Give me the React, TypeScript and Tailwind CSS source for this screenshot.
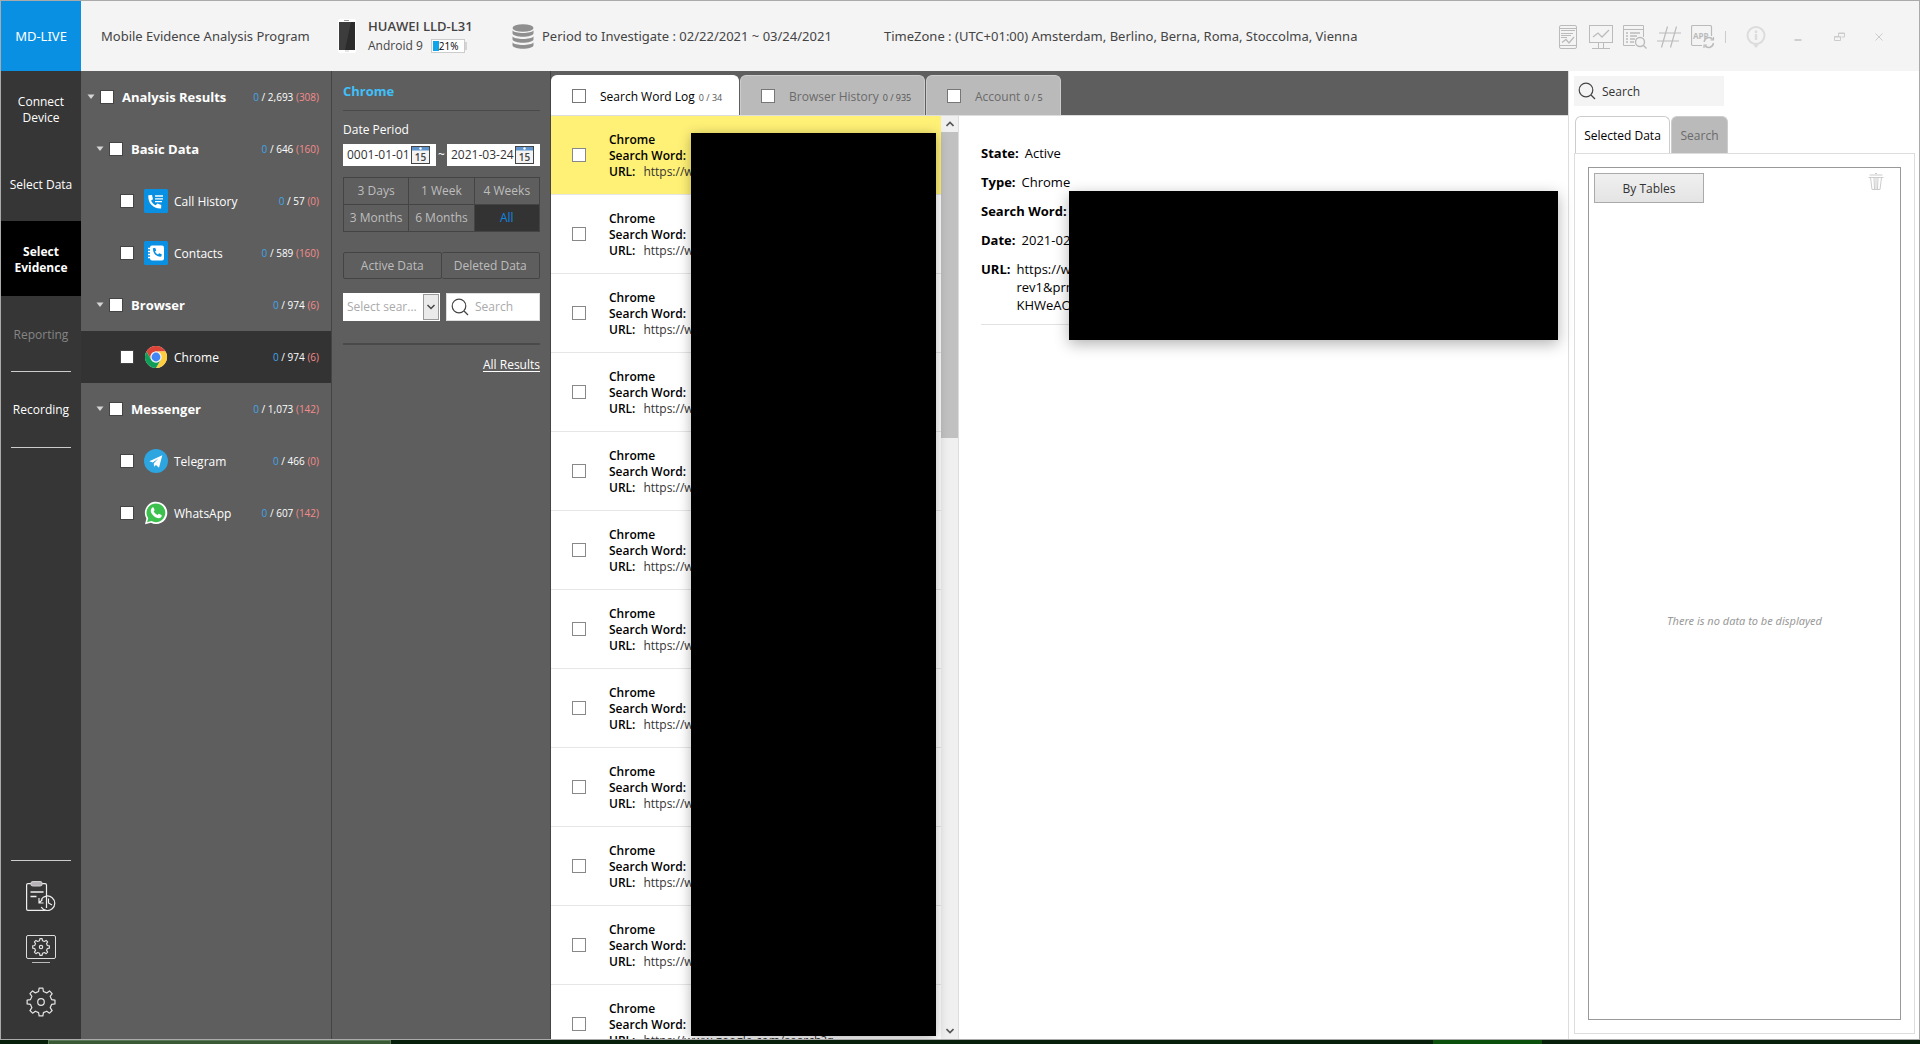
import { useState, ReactNode } from 'react'

interface TreeItem {
  label: string
  level: number
  total: string
  deleted: string
  icon?: ReactNode
  active?: boolean
}

const field = 'appearance-none shrink-0 size-3.5 bg-white checked:bg-sky-500'

function CallIcon() {
  return (
    <svg viewBox="0 0 24 24" className="size-6">
      <rect width="24" height="24" rx="1.5" fill="#0a90e3" />
      <path d="M4.300 6.300 8 6l1 4.200-1.900 1.300c.8 2.200 2.300 3.800 4.600 4.800l1.700-1.800 3.900 1.500-.2 3.500C9.500 20 3.800 14.500 4.300 6.300z" fill="#fff" />
      <path d="M11 7h8M11 9.800h8M11 12.600h7" stroke="#fff" strokeWidth="1.300" />
    </svg>
  )
}

function ContactsIcon() {
  return (
    <svg viewBox="0 0 24 24" className="size-6">
      <rect width="24" height="24" rx="1.5" fill="#0a90e3" />
      <rect x="6" y="4.500" width="14" height="15" rx="2" fill="#fff" />
      <path d="M4 7.500h3.500M4 10.500h3.500M4 13.500h3.500M4 16.500h3.500" stroke="#fff" strokeWidth="1.400" />
      <path d="m9 7.200 2.200-.4 1 2.700-1.200 1c.6 1.400 1.600 2.400 3 3l1.100-1.200 2.700 1-.4 2.300C12.300 16 8.600 12.300 9 7.200z" fill="#0a90e3" />
    </svg>
  )
}

function ChromeIcon() {
  return (
    <svg viewBox="0 0 48 48" className="size-6">
      <circle cx="24" cy="24" r="22" fill="#fff" />
      <path d="M24 13h19.100A22 22 0 0 0 4.900 13l9.600 16.500A11 11 0 0 1 24 13z" fill="#db4437" />
      <path d="M33.500 29.500 24 46a22 22 0 0 0 19.100-33H24a11 11 0 0 1 9.500 16.500z" fill="#ffcd40" />
      <path d="M14.500 29.500 4.900 13A22 22 0 0 0 24 46l9.500-16.500a11 11 0 0 1-19 0z" fill="#0f9d58" />
      <circle cx="24" cy="24" r="11" fill="#f1f1f1" />
      <circle cx="24" cy="24" r="8.800" fill="#4285f4" />
    </svg>
  )
}

function TelegramIcon() {
  return (
    <svg viewBox="0 0 24 24" className="size-6">
      <circle cx="12" cy="12" r="12" fill="#2ca5e0" />
      <path d="M5.300 12.200 18.300 6.300 15 18.800l-3-2.900-2 1.900-.2-3.500 4.600-4.800-5.700 4z" fill="#fff" />
    </svg>
  )
}

function WhatsAppIcon() {
  return (
    <svg viewBox="0 0 24 24" className="size-6">
      <path d="M1 23.200 2.400 17.500A11.200 11.200 0 1 1 6.900 21.800z" fill="#fff" />
      <path d="M3.100 21.200 4.200 17.200A9.400 9.400 0 1 1 7.300 20z" fill="#3cc14e" />
      <path d="M8.400 6.400c.6-.3 1.100-.1 1.300.4l.8 1.900c.1.400 0 .7-.9 1.600.9 1.800 2.200 3 4.100 3.800.9-1.100 1.100-1.400 1.600-1.200l2.200 1.100c.4.300.2 1.900-.7 2.600-1.100.9-2.700.9-4.900-.1-2.800-1.300-4.800-4.200-5.100-5.900-.2-1.700.7-3.700 1.600-4.200z" fill="#fff" />
    </svg>
  )
}

function SearchIcon({ className }: { className: string }) {
  return (
    <svg viewBox="0 0 18 18" fill="none" stroke="#444" strokeWidth="1.200" className={className}>
      <circle cx="8" cy="8" r="6.800" />
      <path d="m13 13 4 4" />
    </svg>
  )
}

// gear outline drawn with eight square teeth
function Gear({ className, hub }: { className: string; hub: number }) {
  return (
    <svg viewBox="0 0 32 32" fill="none" stroke="#e4e4e4" strokeWidth="1.300" strokeLinejoin="round" className={className}>
      <path d="M14 1.200h4l.6 3.600 3.500 1.500 3-2.100 2.800 2.800-2.100 3 1.500 3.400 3.600.6v4l-3.600.6-1.500 3.500 2.100 3-2.800 2.800-3-2.100-3.500 1.500-.6 3.600h-4l-.6-3.600-3.400-1.500-3 2.100-2.800-2.800 2.100-3-1.500-3.500-3.600-.6v-4l3.600-.6 1.500-3.400-2.100-3L7 4.200l3 2.100 3.400-1.500z" />
      <circle cx="16" cy="16" r={hub} />
    </svg>
  )
}

const tree: TreeItem[] = [
  { label: 'Analysis Results', level: 0, total: '2,693', deleted: '308' },
  { label: 'Basic Data', level: 1, total: '646', deleted: '160' },
  { label: 'Call History', level: 2, total: '57', deleted: '0', icon: <CallIcon /> },
  { label: 'Contacts', level: 2, total: '589', deleted: '160', icon: <ContactsIcon /> },
  { label: 'Browser', level: 1, total: '974', deleted: '6' },
  { label: 'Chrome', level: 2, total: '974', deleted: '6', icon: <ChromeIcon />, active: true },
  { label: 'Messenger', level: 1, total: '1,073', deleted: '142' },
  { label: 'Telegram', level: 2, total: '466', deleted: '0', icon: <TelegramIcon /> },
  { label: 'WhatsApp', level: 2, total: '607', deleted: '142', icon: <WhatsAppIcon /> },
]

const indents = ['pl-1.5', 'pl-[15px]', 'pl-[39px]']

const steps = [
  { label: 'Connect Device', style: 'px-3 text-white' },
  { label: 'Select Data', style: 'text-white' },
  { label: 'Select Evidence', style: 'bg-black px-3 text-white font-bold' },
  { label: 'Reporting', style: 'text-[#858585]' },
]

const tabs = [
  { label: 'Search Word Log', count: '0 / 34', width: 'w-[188px]' },
  { label: 'Browser History', count: '0 / 935', width: 'w-[185px]' },
  { label: 'Account', count: '0 / 5', width: 'w-[135px]' },
]

const periods = ['3 Days', '1 Week', '4 Weeks', '3 Months', '6 Months', 'All']

function Header() {
  return (
    <header className="flex h-[70px] shrink-0 items-center bg-[#f4f4f4] font-['Noto_Sans','Open_Sans',sans-serif] text-[13px] text-[#444]">
      <div className="flex h-full w-20 shrink-0 items-center justify-center bg-[#0a90e3] pt-0.5 text-white">MD-LIVE</div>
      <h1 className="w-[257px] shrink-0 pt-0.5 pl-5 whitespace-nowrap">Mobile Evidence Analysis Program</h1>
      <div className="flex w-[174px] shrink-0 items-center gap-3 font-['Open_Sans','Noto_Sans',sans-serif]">
        <svg viewBox="0 0 18 34" className="h-[34px] w-[18px] shrink-0">
          <rect width="18" height="34" rx="2" fill="#fff" />
          <path d="M6 1.500h5" stroke="#999" />
          <path d="M7 32h4" stroke="#ccc" />
          <rect x="1" y="3" width="16" height="28" fill="#2b2b2b" />
          <path d="M1 3h12L7 31H1z" fill="#3c3c3c" />
        </svg>
        <div className="leading-5">
          <div className="font-semibold whitespace-nowrap">HUAWEI LLD-L31</div>
          <div className="flex items-center gap-2 text-xs leading-5 whitespace-nowrap">
            Android 9
            <span className="flex items-center">
              <span className="flex h-3.5 w-[34px] border border-[#ccc] bg-white p-px">
                <span className="w-1.5 bg-[#0ea5ea]" />
                <span className="text-[10px] leading-[10px] text-black">21%</span>
              </span>
              <span className="h-2 w-0.5 bg-[#d4d4d4]" />
            </span>
          </div>
        </div>
      </div>
      <svg viewBox="0 0 22 25" fill="#8f8f8f" className="mr-2 h-[25px] w-[22px] shrink-0">
        <ellipse cx="11" cy="4" rx="10.500" ry="3.800" />
        <path d="M.5 6.200c2 3.600 19 3.600 21 0v3c0 4.600-21 4.600-21 0z" />
        <path d="M.5 12.200c2 3.600 19 3.600 21 0v3c0 4.600-21 4.600-21 0z" />
        <path d="M.5 18.200c2 3.600 19 3.600 21 0v3c0 4.600-21 4.600-21 0z" />
      </svg>
      <p className="w-[342px] shrink-0 pt-0.5 whitespace-nowrap">Period to Investigate : 02/22/2021 ~ 03/24/2021</p>
      <p className="pt-0.5 whitespace-nowrap">TimeZone : (UTC+01:00) Amsterdam, Berlino, Berna, Roma, Stoccolma, Vienna</p>

      <div className="ml-auto flex shrink-0 items-center pt-0.5 pr-[34px]">
        <button aria-label="Report" className="mr-3">
          <svg viewBox="0 0 18 24" fill="none" stroke="#bbb" className="h-6 w-[18px]">
            <rect x=".5" y=".5" width="17" height="23" rx="1.500" />
            <path d="M1 3.500h16M1 20.500h16M2 5.500h14M2 8.500h12M2 10.500h10M2 12.500h6" />
            <path d="m3 17.500 4-3 3 3.500 5-6" strokeWidth="1.300" />
          </svg>
        </button>
        <button aria-label="Monitor" className="mr-2.5">
          <svg viewBox="0 0 24 24" fill="none" stroke="#bbb" className="size-6">
            <rect x=".5" y=".5" width="23" height="17" />
            <path d="m4 12 5-4 4 4 7-7" strokeWidth="1.300" />
            <path d="M9.500 18v5M14.500 18v5M3 23.500h18" />
          </svg>
        </button>
        <button aria-label="Search list" className="mr-2.5">
          <svg viewBox="0 0 24 24" fill="none" stroke="#bbb" className="size-6">
            <path d="M12 20.500H.5V.5h20V12M.5 4.500h20" />
            <path d="M3 8h2M7 8h10M3 11h2M7 11h7M3 14h2M7 14h5M3 17h2M7 17h4" strokeWidth="1.400" />
            <circle cx="17" cy="17" r="4.500" strokeWidth="1.400" />
            <path d="m20.200 20.200 3.300 3.300" strokeWidth="1.400" />
          </svg>
        </button>
        <button aria-label="Hash" className="mr-2.5">
          <svg viewBox="0 0 24 24" fill="none" stroke="#bbb" strokeWidth="1.200" className="size-6">
            <path d="M10.500 1.500 4.500 22.500M19.500 1.500l-6 21M2 8h22M0 16h22" />
          </svg>
        </button>
        <button aria-label="Update app" className="mr-2.5">
          <svg viewBox="0 0 24 24" fill="none" stroke="#bbb" className="size-6">
            <path d="M11 20.500H2Q.5 20.500.5 19V2Q.5.5 2 .5h17q1.500 0 1.500 1.500v9" strokeWidth="1.200" />
            <text x="2" y="13.500" fontSize="8" fontWeight="700" fill="#bbb" stroke="none">APP</text>
            <path d="M13.200 17a4.700 4.700 0 0 1 8.500-2.500M22.400 18a4.700 4.700 0 0 1-8.500 2.500" strokeWidth="1.500" />
            <path d="M22.500 12v3h-3M13 23v-3h3" strokeWidth="1.200" />
          </svg>
        </button>
        <span className="mr-5 h-3 w-px bg-[#ccc]" />
        <button aria-label="Information" className="mr-7">
          <svg viewBox="0 0 20 22" fill="none" stroke="#dcdcdc" className="h-[22px] w-5">
            <circle cx="10" cy="9.500" r="8.500" strokeWidth="2" />
            <path d="M10 8v6M10 4.500V7" strokeWidth="2.400" />
            <path d="m7 18.500 3 3.500 3-3.500z" fill="#dcdcdc" stroke="none" />
          </svg>
        </button>
        <button aria-label="Minimize" className="mr-8">
          <svg viewBox="0 0 8 10" className="h-2.5 w-2"><path d="M.5 8h7" stroke="#cfcfcf" strokeWidth="2" /></svg>
        </button>
        <button aria-label="Restore" className="mr-7">
          <svg viewBox="0 0 11 10" fill="none" stroke="#ccc" className="h-2.5 w-[11px]">
            <path d="M.5 4.500h6v4h-6zM.5 5h6M4.500 4V1h6v4h-3M4.500 1.500h6" />
          </svg>
        </button>
        <button aria-label="Close">
          <svg viewBox="0 0 12 10" stroke="#ccc" className="h-2.5 w-3"><path d="m2.500 1.500 7 7m0-7-7 7" /></svg>
        </button>
      </div>
    </header>
  )
}

function Sidebar() {
  return (
    <nav className="flex w-20 shrink-0 flex-col bg-[#363636] text-xs leading-4">
      {steps.map(s => (
        <button key={s.label} className={`flex h-[75px] items-center justify-center pt-0.5 text-center ${s.style}`}>
          {s.label}
        </button>
      ))}
      <button className="mx-2.5 flex h-[77px] items-center justify-center border-y border-[#ccc] text-white">Recording</button>
      <div className="mx-2.5 mt-auto flex flex-col items-center gap-6 border-t border-[#ccc] pt-5 pb-[22px]">
        <button aria-label="History">
          <svg viewBox="0 0 30 30" fill="none" stroke="#eee" strokeWidth="1.200" className="size-[30px]">
            <path d="M5 2.600H2q-1.400 0-1.400 1.400v24q0 1.400 1.400 1.400h17.500M16 2.600h3q1.500 0 1.500 1.400V27" />
            <rect x="5" y=".6" width="11" height="4.400" rx="2" fill="#b5b0b5" stroke="#ccc" />
            <path d="M4.500 11H17.500M4.500 15.500H10.500" strokeWidth="1.600" />
            <path d="M15.200 18.500a7.300 7.300 0 1 1 0 7.500M13 17v5h4.500M13.500 21.500l3-3M22.500 17.500V22l3.500 2" />
          </svg>
        </button>
        <button aria-label="Display settings" className="flex flex-col items-center">
          <span className="flex h-6 w-[30px] items-center justify-center rounded-xs border border-[#ddd]">
            <Gear className="size-4.5 stroke-2" hub={3} />
          </span>
          <span className="mt-[3px] h-px w-4.5 bg-[#bbb]" />
        </button>
        <button aria-label="Settings"><Gear className="size-[30px]" hub={3.5} /></button>
      </div>
    </nav>
  )
}

function Tree() {
  return (
    <ul className="w-[251px] shrink-0 border-r border-[#444] bg-[#5e5e5e]">
      {tree.map((t, i) => (
        <li key={t.label} className={`flex h-[52px] items-center pr-3 ${indents[t.level]} ${t.active ? 'bg-[#333]' : ''}`}>
          {t.level < 2 && (
            <button aria-label="Collapse" className="mr-[5px]">
              <svg viewBox="0 0 8 6" className="h-1.5 w-2"><path d="M.5.500h7L4 5z" fill="#d6d6d6" /></svg>
            </button>
          )}
          <input id={`node-${i}`} type="checkbox" className={`${field} border border-[#444]`} />
          {t.icon && <span className="ml-2.5">{t.icon}</span>}
          <label
            htmlFor={`node-${i}`}
            className={`pt-0.5 whitespace-nowrap text-white ${t.icon ? 'ml-1.5 text-xs' : 'ml-2 text-[13px] font-bold'}`}
          >
            {t.label}
          </label>
          <span className="ml-auto text-[10px] whitespace-nowrap text-white">
            <span className="text-[#42a5e8]">0</span> / {t.total} <span className="text-[#f58c8c]">({t.deleted})</span>
          </span>
        </li>
      ))}
    </ul>
  )
}

function DateField({ label, value }: { label: string; value: string }) {
  return (
    <span className="flex h-[22px] w-[93px] items-center bg-white">
      <input aria-label={label} defaultValue={value} className="w-[68px] pl-1 text-xs text-[#333] outline-none" />
      <button aria-label={`Pick ${label}`}>
        <svg viewBox="0 0 20 18" className="h-[18px] w-5">
          <rect x=".5" y=".5" width="18" height="17" fill="#f3f3f3" stroke="#444" />
          <path d="M1 1h17v3.500H1z" fill="#5f95cc" />
          <circle cx="9.500" cy="2.500" r="1.200" fill="#fff" />
          <text x="9.500" y="15" fontSize="10" fontWeight="600" textAnchor="middle" fill="#444">15</text>
        </svg>
      </button>
    </span>
  )
}

function FilterPanel() {
  const [period, setPeriod] = useState('All')

  return (
    <section className="w-[219px] shrink-0 border-r border-[#444] bg-[#5e5e5e] pr-2.5 pl-[11px] text-xs">
      <h2 className="border-b border-[#4a4a4a] pt-[9px] pb-2 text-[13px] leading-[22px] font-bold text-[#3fc0fa]">Chrome</h2>
      <p className="pt-[11px] leading-4 text-white">Date Period</p>
      <div className="mt-1.5 flex items-center justify-between text-white">
        <DateField label="start date" value="0001-01-01" />
        <span>~</span>
        <DateField label="end date" value="2021-03-24" />
      </div>
      <div className="mt-[11px] grid grid-cols-3 gap-px border border-[#444] bg-[#444]">
        {periods.map(p => (
          <button
            key={p}
            onClick={() => setPeriod(p)}
            className={`h-[26px] whitespace-nowrap ${p === period ? 'bg-[#333] text-[#0f86e0]' : 'bg-[#5e5e5e] text-[#bdbdbd]'}`}
          >
            {p}
          </button>
        ))}
      </div>
      <div className="mt-5 grid grid-cols-2 text-[#bdbdbd]">
        <button className="h-[27px] rounded-xs border border-[#444]">Active Data</button>
        <button className="h-[27px] rounded-xs border border-l-0 border-[#444]">Deleted Data</button>
      </div>
      <div className="mt-3.5 flex gap-1.5">
        <div className="relative w-[97px]">
          <select aria-label="Search field" className="h-7 w-full appearance-none bg-white pr-5 pl-1 text-xs text-[#aaa]">
            <option>Select sear...</option>
          </select>
          <span className="pointer-events-none absolute inset-y-px right-px flex w-4 items-center justify-center border border-[#999] bg-[#eaeaea]">
            <svg viewBox="0 0 8 6" fill="none" stroke="#444" strokeWidth="1.500" className="h-1.5 w-2"><path d="m.5 1 3.500 3.500L7.500 1" /></svg>
          </span>
        </div>
        <label className="flex h-7 flex-1 items-center gap-1.5 border border-[#ddd] bg-white pl-1">
          <SearchIcon className="size-[18px] shrink-0" />
          <input aria-label="Search" placeholder="Search" className="w-full min-w-0 outline-none placeholder:text-[#aaa]" />
        </label>
      </div>
      <div className="mt-[22px] border-t-2 border-[#4a4a4a] pt-2.5 text-right leading-5">
        <a href="#all" className="text-white underline underline-offset-2">All Results</a>
      </div>
    </section>
  )
}

function ResultList() {
  return (
    <div className="relative flex w-[408px] shrink-0 overflow-hidden border-r border-[#ddd]">
      <ul className="h-0 min-h-full flex-1 overflow-hidden text-xs leading-4 text-black">
        {Array.from({ length: 12 }, (_, i) => (
          <li key={i} className={`flex h-[79px] items-center border-b border-[#e6e6e6] pl-[21px] ${i === 0 ? 'bg-[#fff176]' : 'bg-white'}`}>
            <input id={`row-${i}`} type="checkbox" className={`${field} border border-[#888]`} />
            <label htmlFor={`row-${i}`} className="ml-[23px] block pt-0.5 whitespace-nowrap">
              <span className="block font-semibold">Chrome</span>
              <span className="block font-semibold">Search Word:</span>
              <span className="flex gap-2">
                <span className="font-semibold">URL:</span>
                <span className="text-[#333]">https://www.google.com/search?q</span>
              </span>
            </label>
          </li>
        ))}
      </ul>
      <div className="flex w-[17px] shrink-0 flex-col items-center bg-[#f0f0f0]">
        <button aria-label="Scroll up" className="flex h-4 items-center">
          <svg viewBox="0 0 8 6" fill="none" stroke="#555" strokeWidth="1.600" className="h-1.5 w-2"><path d="M.5 5 4 1.500 7.500 5" /></svg>
        </button>
        <div className="h-[306px] w-full bg-[#c1c1c1]" />
        <button aria-label="Scroll down" className="mt-auto flex h-4 items-center">
          <svg viewBox="0 0 8 6" fill="none" stroke="#555" strokeWidth="1.600" className="h-1.5 w-2"><path d="m.5 1 3.500 3.500L7.500 1" /></svg>
        </button>
      </div>
      <div className="absolute top-[17px] right-[22px] bottom-[3px] w-[245px] bg-black shadow-[0_2px_12px_rgba(0,0,0,0.3)]" />
    </div>
  )
}

function Field({ name, children }: { name: string; children?: ReactNode }) {
  return (
    <div className="flex gap-1.5">
      <dt className="font-bold whitespace-nowrap">{name}:</dt>
      <dd>{children}</dd>
    </div>
  )
}

function Detail() {
  return (
    <article className="relative flex-1 bg-white px-[22px] pt-7">
      <dl className="flex flex-col gap-[11px] border-b border-[#e2e2e2] pb-2.5 text-[13px] leading-[18px] text-black">
        <Field name="State">Active</Field>
        <Field name="Type">Chrome</Field>
        <Field name="Search Word" />
        <Field name="Date">2021-02</Field>
        <Field name="URL">
          https://w
          <br />
          rev1&amp;prm
          <br />
          KHWeAO
        </Field>
      </dl>
      <div className="absolute top-[75px] right-2.5 left-[110px] h-[149px] bg-black shadow-[0_4px_14px_rgba(0,0,0,0.3)]" />
    </article>
  )
}

function Results() {
  return (
    <main className="flex min-w-0 flex-1 flex-col">
      <div className="flex h-[45px] shrink-0 items-end gap-px border-b border-[#ddd] bg-[#5e5e5e]">
        {tabs.map((t, i) => (
          <div
            key={t.label}
            className={`flex h-10 items-center rounded-t-md border border-b-0 pl-5 ${t.width} ${
              i === 0 ? 'border-white bg-white text-black' : 'border-[#ccc] bg-[#bababa] text-[#6a6a6a]'
            }`}
          >
            <input aria-label={`Select ${t.label}`} type="checkbox" className={`${field} border border-[#777]`} />
            <button className="ml-3.5 flex items-baseline gap-1 pt-0.5 text-xs whitespace-nowrap">
              {t.label}
              <span className="text-[9px] text-[#555]">{t.count}</span>
            </button>
          </div>
        ))}
      </div>
      <div className="flex flex-1">
        <ResultList />
        <Detail />
      </div>
    </main>
  )
}

function SelectedPanel() {
  return (
    <aside className="flex w-[351px] shrink-0 flex-col border-l border-[#ddd] bg-white pt-[5px] pr-1 pb-[5px] pl-[5px] text-xs">
      <label className="flex h-[30px] w-[150px] items-center gap-1.5 bg-[#f4f4f4] pl-1">
        <SearchIcon className="size-[18px] shrink-0" />
        <input aria-label="Search all" placeholder="Search" className="w-full min-w-0 pt-0.5 outline-none placeholder:text-[#333]" />
      </label>
      <div className="mt-2.5 flex gap-px pl-px">
        <button className="h-[37px] w-[95px] rounded-t-md border border-b-0 border-[#ccc] pt-0.5 text-black">Selected Data</button>
        <button className="h-[37px] w-[57px] rounded-t-md border border-b-0 border-[#ccc] bg-[#bababa] pt-0.5 text-[#6a6a6a]">Search</button>
      </div>
      <div className="flex flex-1 border border-[#ddd] p-[13px]">
        <div className="flex flex-1 flex-col border border-[#999]">
          <div className="flex h-[54px] items-start justify-between pt-[5px] pr-4 pl-[5px]">
            <button className="h-[30px] w-[110px] border border-[#aaa] bg-linear-to-b from-[#f0f0f0] to-[#e4e4e4] pt-0.5 text-[#333]">
              By Tables
            </button>
            <button aria-label="Delete">
              <svg viewBox="0 0 16 17" fill="none" stroke="#ccc" className="h-[17px] w-4">
                <path d="M.5 4.500h15M1.500 2h13M7 .500h2M2.500 4.500l1.500 12h8l1.500-12M6 5l.5 11M10 5l-.5 11M8 5v11" />
              </svg>
            </button>
          </div>
          <p className="flex flex-1 items-center justify-center pt-0.5 font-['Noto_Sans','Open_Sans',sans-serif] text-[11px] text-[#999] italic">
            There is no data to be displayed
          </p>
        </div>
      </div>
    </aside>
  )
}

export default function App() {
  return (
    <div className="flex h-screen flex-col overflow-hidden bg-[#06200b] font-['Open_Sans','Noto_Sans',sans-serif]">
      <div className="flex min-h-0 flex-1 flex-col border border-[#aaa]">
        <Header />
        <div className="flex min-h-0 flex-1">
          <Sidebar />
          <Tree />
          <FilterPanel />
          <Results />
          <SelectedPanel />
        </div>
      </div>
      <footer className="flex h-1 shrink-0 justify-between pr-[378px] pl-12">
        <span className="w-[343px] border-x border-t border-[#5c7a5a] bg-[#3a5a36]" />
        <span className="w-[109px] bg-[#0b500d]" />
      </footer>
    </div>
  )
}
